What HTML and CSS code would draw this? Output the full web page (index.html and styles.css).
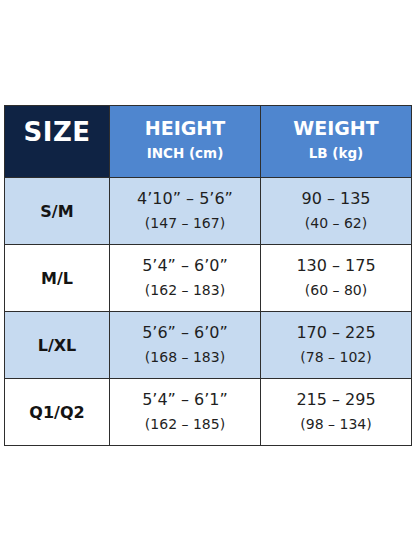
FILE: index.html
```html
<!DOCTYPE html>
<html>
<head>
<meta charset="utf-8">
<link rel="stylesheet" href="styles.css">
</head>
<body>
<div class="page">
  <table class="chart">
    <thead>
      <tr>
        <th class="size-head">SIZE</th>
        <th class="col-head"><span class="main">HEIGHT</span><span class="sub">INCH (cm)</span></th>
        <th class="col-head"><span class="main">WEIGHT</span><span class="sub">LB (kg)</span></th>
      </tr>
    </thead>
    <tbody>
      <tr class="alt">
        <td class="size">S/M</td>
        <td><span class="v1">4’10” – 5’6”</span><span class="v2">(147 – 167)</span></td>
        <td><span class="v1">90 – 135</span><span class="v2">(40 – 62)</span></td>
      </tr>
      <tr>
        <td class="size">M/L</td>
        <td><span class="v1">5’4” – 6’0”</span><span class="v2">(162 – 183)</span></td>
        <td><span class="v1">130 – 175</span><span class="v2">(60 – 80)</span></td>
      </tr>
      <tr class="alt">
        <td class="size">L/XL</td>
        <td><span class="v1">5’6” – 6’0”</span><span class="v2">(168 – 183)</span></td>
        <td><span class="v1">170 – 225</span><span class="v2">(78 – 102)</span></td>
      </tr>
      <tr>
        <td class="size">Q1/Q2</td>
        <td><span class="v1">5’4” – 6’1”</span><span class="v2">(162 – 185)</span></td>
        <td><span class="v1">215 – 295</span><span class="v2">(98 – 134)</span></td>
      </tr>
    </tbody>
  </table>
</div>
</body>
</html>
```
FILE: styles.css
```css
html, body {
  margin: 0;
  padding: 0;
  background: #ffffff;
}
.page {
  width: 416px;
  height: 554px;
  padding: 105px 0 0 4px;
  box-sizing: border-box;
}
.chart {
  border-collapse: collapse;
  width: 408px;
  table-layout: fixed;
  font-family: "DejaVu Sans", sans-serif;
  color: #1f1f1f;
}
.chart th, .chart td {
  border: 1.5px solid #2e2e2e;
  text-align: center;
  vertical-align: middle;
  padding: 0;
}
.chart th:nth-child(1), .chart td:nth-child(1) { width: 104px; }
.chart thead tr { height: 72px; }
.chart tbody tr { height: 67px; }
.chart .size-head {
  background: #0f2344;
  color: #ffffff;
  font-size: 26px;
  line-height: 30px;
  font-weight: bold;
  vertical-align: top;
  padding-top: 11px;
  letter-spacing: 0.5px;
}
.chart .col-head {
  background: #4f86cf;
  color: #ffffff;
  font-weight: bold;
  vertical-align: top;
  padding-top: 9px;
}
.col-head .main {
  display: block;
  font-size: 19px;
  line-height: 26px;
}
.col-head .sub {
  display: block;
  font-size: 13.5px;
  line-height: 24px;
}
.alt td { background: #c6daf0; }
.size {
  font-weight: bold;
  font-size: 16px;
  color: #141414;
}
.v1 {
  display: block;
  font-size: 16px;
  line-height: 24px;
}
.v2 {
  display: block;
  font-size: 14px;
  line-height: 24px;
}
```
